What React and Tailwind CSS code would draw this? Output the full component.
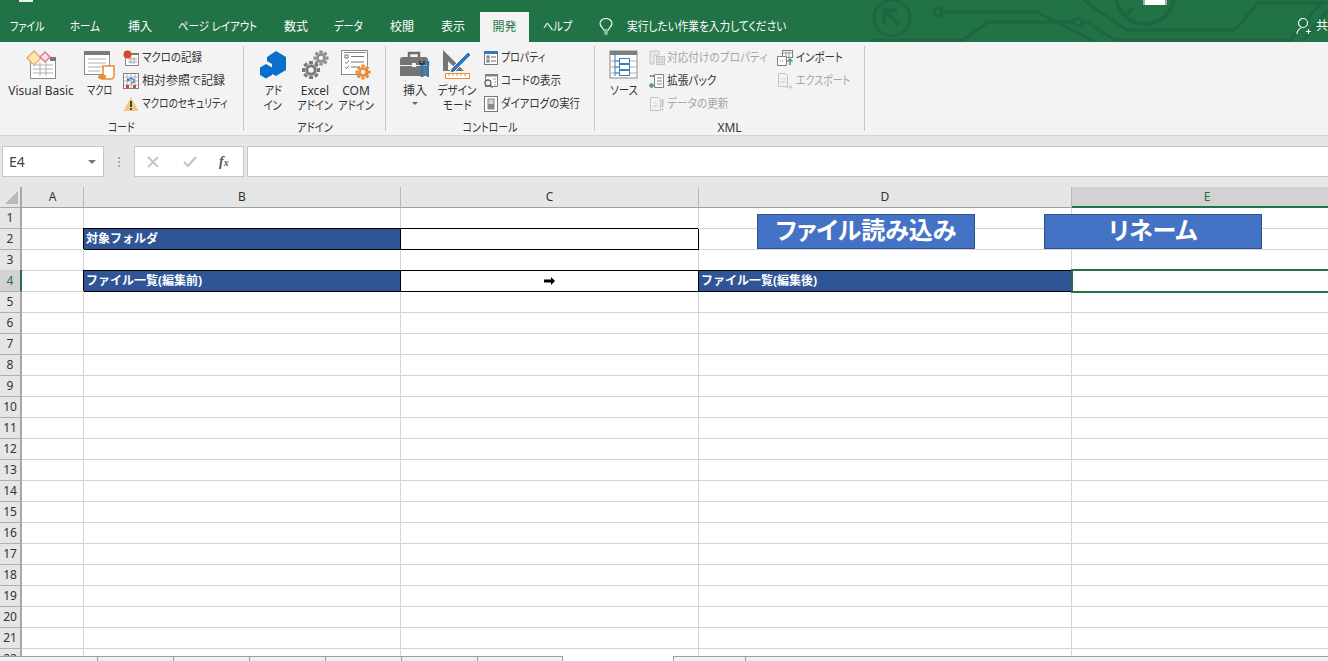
import React from 'react';

const TABS = [
  { t: 'ファイル', w: 'w-[34px]', s: 'scale-x-[.83]' },
  { t: 'ホーム', w: 'w-[32px]', s: 'scale-x-[.87]' },
  { t: '挿入', w: 'w-[24px]', s: '' },
  { t: 'ページ レイアウト', w: 'w-[80px]', s: 'scale-x-[.87]' },
  { t: '数式', w: 'w-[24px]', s: '' },
  { t: 'データ', w: 'w-[30px]', s: 'scale-x-[.85]' },
  { t: '校閲', w: 'w-[25px]', s: '' },
  { t: '表示', w: 'w-[25px]', s: '' },
];
const COLS = ['A', 'B', 'C', 'D'];
const ROWS = Array.from({ length: 22 }, (_, i) => i + 1);

/* Meiryo UI kana run narrower than Noto's, so squeeze them a bit */
function Sq({ s = '', o = 'origin-left', children }) {
  return <span className={`inline-block whitespace-nowrap ${o} ${s}`}>{children}</span>;
}

/* ---------- icons ---------- */
function CircuitArt() {
  return (
    <svg width="458" height="42" viewBox="870 0 458 42" className="absolute right-0 top-0" fill="none" stroke="#1f6640" strokeWidth="3">
      <circle cx="892" cy="18" r="18" />
      <path d="M884 10h13M884 10v13M884 10l15 15" strokeWidth="4" />
      <circle cx="938" cy="12" r="4" />
      <path d="M942 12h95l56 29" />
      <path d="M870 40h93l25-18h86" />
      <circle cx="1078" cy="22" r="4" />
      <path d="M1082 22h5l28 18h175l33-40" />
      <path d="M1083 0l44 30h108l23-27h70" />
      <circle cx="1145" cy="-5" r="29" strokeWidth="4" />
      <path d="M1133 8l-6 6" strokeWidth="4" />
      <path d="M1303 41l25-31" />
      <rect x="1143" y="0" width="24" height="5" fill="#fff" stroke="none" />
      <rect x="1143" y="0" width="2" height="5" fill="#aaa" stroke="none" />
      <rect x="1165" y="0" width="2" height="5" fill="#aaa" stroke="none" />
    </svg>
  );
}

function VbIcon() {
  return (
    <svg width="32" height="30" viewBox="0 0 32 30" fill="none">
      <rect x="5.500" y="7.500" width="25" height="21" fill="#fff" stroke="#8a8a8a" />
      <rect x="25" y="7" width="6" height="4" fill="#7a7a7a" />
      <path d="M8 15h20M8 19h20M8 23h20M15 12v14M21 12v14" stroke="#b0b0b0" />
      <path d="M9 1l7 7-7 7-7-7z" fill="#fbe6b8" stroke="#e0b46a" strokeWidth="1.500" />
      <path d="M20 2l5 5-5 5-5-5z" fill="#fbe0e6" stroke="#de7a92" strokeWidth="1.500" />
    </svg>
  );
}

function MacroIcon() {
  return (
    <svg width="32" height="30" viewBox="0 0 32 30" fill="none">
      <rect x="0.500" y="1.500" width="25" height="23" fill="#fff" stroke="#8a8a8a" />
      <rect x="0" y="1" width="26" height="4" fill="#7a7a7a" />
      <path d="M4 9h18M4 13h18M4 17h18M4 21h12" stroke="#b0b0b0" />
      <path d="M19 16h11v9c0 2-1 4-3 4H17c2 0 2-2 2-4z" fill="#fff" stroke="#ed8b3a" strokeWidth="1.600" />
      <path d="M16 25h6c0 2 0 4-3 4h-3c-1 0-2-1-2-2s1-2 2-2z" fill="#ed8b3a" />
    </svg>
  );
}

function RecordIcon() {
  return (
    <svg className="shrink-0" width="16" height="16" viewBox="0 0 16 16" fill="none">
      <rect x="2.500" y="3.500" width="13" height="12" fill="#fff" stroke="#8a8a8a" />
      <rect x="6" y="3" width="10" height="2" fill="#7a7a7a" />
      <path d="M5 9h9M5 12h9M8 7v7M11 7v7" stroke="#a8a8a8" />
      <circle cx="4.500" cy="4.500" r="4" fill="#d9482b" />
    </svg>
  );
}

function RelativeIcon() {
  return (
    <svg className="shrink-0" width="16" height="16" viewBox="0 0 16 16" fill="none">
      <rect x="0.500" y="0.500" width="15" height="15" fill="#fff" stroke="#808080" />
      <path d="M1 4h14M1 8h14M1 12h14M4 1v14M8 1v14M12 1v14" stroke="#b4b4b4" />
      <path d="M5 7c1-2 5-2 6 0s-1 3-3 3" stroke="#3f7fc0" strokeWidth="1.400" />
      <path d="M4 5v3h3z" fill="#3f7fc0" />
      <rect x="3" y="12" width="3" height="3" fill="#d9482b" />
      <rect x="10" y="12" width="3" height="3" fill="#d9482b" />
    </svg>
  );
}

function WarnIcon() {
  return (
    <svg className="shrink-0" width="16" height="16" viewBox="0 0 16 16">
      <path d="M8 1l7.500 14H.5z" fill="#f2c77e" />
      <rect x="7" y="5" width="2" height="6" fill="#444" />
      <rect x="7" y="12" width="2" height="2" fill="#444" />
    </svg>
  );
}

function AddinIcon() {
  return (
    <svg width="28" height="30" viewBox="0 0 28 30">
      <path d="M17 1l10 6v13l-10 6-4-2V14l-5-3V7z" fill="#0a6fcb" />
      <path d="M7 14l6 3.500V25l-6 3.500L1 25v-7.500z" fill="#0a6fcb" />
    </svg>
  );
}

function gearPath(cx, cy, r) {
  const pts = [];
  for (let i = 0; i < 8; i++) {
    const a = (i * Math.PI) / 4;
    pts.push(`M${cx + Math.cos(a) * (r - 2)} ${cy + Math.sin(a) * (r - 2)}L${cx + Math.cos(a) * (r + 1)} ${cy + Math.sin(a) * (r + 1)}`);
  }
  return pts.join('');
}

function Gear({ cx, cy, r, color, hole = '#f3f3f3' }) {
  return (
    <g>
      <path d={gearPath(cx, cy, r)} stroke={color} strokeWidth={r / 2} />
      <circle cx={cx} cy={cy} r={r * 0.72} fill={color} />
      <circle cx={cx} cy={cy} r={r * 0.34} fill={hole} />
    </g>
  );
}

function ExcelAddinIcon() {
  return (
    <svg width="28" height="30" viewBox="0 0 28 30">
      <Gear cx={20} cy={8} r={6.500} color="#8d8d8d" />
      <Gear cx={10} cy={20} r={8} color="#7a7a7a" />
    </svg>
  );
}

function ComIcon() {
  return (
    <svg width="32" height="30" viewBox="0 0 32 30" fill="none">
      <rect x="1.500" y="0.500" width="26" height="24" fill="#fff" stroke="#8a8a8a" />
      <path d="M4 2.500h22" stroke="#8a8a8a" />
      <rect x="5" y="5" width="3" height="3" stroke="#777" />
      <path d="M11 6.500h13M11 12h13M11 17h6M5 12l1.500 1.500L9 10.500M5 17l1.500 1.500L9 15.500" stroke="#777" />
      <Gear cx={23} cy={22} r={6.500} color="#ed8b3a" />
    </svg>
  );
}

function ToolboxIcon() {
  return (
    <svg width="32" height="30" viewBox="0 0 32 30" fill="none">
      <path d="M10 7V3h10v4" stroke="#6f6f6f" strokeWidth="2.500" />
      <path d="M1 10c0-2 1-3 3-3h22c2 0 3 1 3 3v5H1z" fill="#757575" />
      <rect x="1" y="16" width="28" height="10" rx="1" fill="#757575" />
      <rect x="13" y="13" width="4" height="4" fill="#f3f3f3" />
      <path d="M23 13v14" stroke="#2f78bd" strokeWidth="3" />
      <path d="M29 13v14" stroke="#2f78bd" strokeWidth="2" />
      <path d="M26.500 11v5c0 1 2.500 1 2.500 0v-5M29.500 11v5" stroke="#2f78bd" strokeWidth="1.500" />
      <path d="M21 11v3h4v-3" stroke="#333" strokeWidth="1.500" />
    </svg>
  );
}

function DesignIcon() {
  return (
    <svg width="32" height="32" viewBox="0 0 32 32" fill="none">
      <path d="M2 1l21 21H2z" fill="#757575" />
      <path d="M7 12l9 9H7z" fill="#f3f3f3" />
      <path d="M10 20L27 3l3 3-17 17-4 1z" fill="#2f78bd" stroke="#f3f3f3" />
      <rect x="4.500" y="24.500" width="24" height="5" fill="#fff" stroke="#ed8b3a" />
      <path d="M8 25v2M12 25v2M16 25v2M20 25v2M24 25v2" stroke="#ed8b3a" />
    </svg>
  );
}

function PropsIcon() {
  return (
    <svg className="shrink-0" width="16" height="16" viewBox="0 0 16 16" fill="none">
      <rect x="1.500" y="1.500" width="13" height="13" fill="#fff" stroke="#777" />
      <rect x="1" y="1" width="14" height="3" fill="#2f78bd" />
      <rect x="4" y="6" width="2" height="2" stroke="#666" />
      <rect x="4" y="10" width="2" height="2" stroke="#666" />
      <path d="M8 7h5M8 11h5" stroke="#666" />
    </svg>
  );
}

function CodeIcon() {
  return (
    <svg className="shrink-0" width="16" height="16" viewBox="0 0 16 16" fill="none">
      <rect x="2.500" y="1.500" width="12" height="12" fill="#fff" stroke="#808080" />
      <rect x="2" y="1" width="13" height="2.500" fill="#808080" />
      <path d="M10 6h3M11 9h2M11 12h2" stroke="#999" />
      <circle cx="5" cy="10" r="3" fill="#f3f3f3" stroke="#666" strokeWidth="1.300" />
      <path d="M7 12l2.500 2.500" stroke="#666" strokeWidth="1.600" />
    </svg>
  );
}

function DialogIcon() {
  return (
    <svg className="shrink-0" width="16" height="16" viewBox="0 0 16 16" fill="none">
      <rect x="1.500" y="0.500" width="13" height="15" fill="#fff" stroke="#777" />
      <rect x="5" y="3" width="6" height="10" fill="#d4d4d4" stroke="#888" />
      <rect x="5" y="8" width="6" height="5" fill="#8a8a8a" />
    </svg>
  );
}

function SourceIcon() {
  return (
    <svg width="30" height="30" viewBox="0 0 30 30" fill="none">
      <rect x="1" y="1" width="27" height="27" fill="#fff" stroke="#8a8a8a" />
      <rect x="1" y="1" width="27" height="4" fill="#808080" />
      <path d="M1 11h9M1 17h9M1 23h9M20 11h8M20 17h8M20 23h8" stroke="#b0b0b0" />
      <path d="M6 1v25M6 11h4M6 17h4M6 23h4" stroke="#3f7fc0" />
      <rect x="10.500" y="8.500" width="10" height="5" stroke="#3f7fc0" />
      <rect x="10.500" y="14.500" width="10" height="5" stroke="#3f7fc0" />
      <rect x="10.500" y="20.500" width="10" height="5" stroke="#3f7fc0" />
    </svg>
  );
}

function MapPropsIcon() {
  return (
    <svg className="shrink-0" width="16" height="16" viewBox="0 0 16 16" fill="none" stroke="#c4c4c4">
      <path d="M1 1h9v4H5v9H1z" fill="#e8e8e8" />
      <rect x="7.500" y="6.500" width="8" height="8" fill="#f3f3f3" />
      <path d="M7 9h8M7 12h8M10 7v7M13 7v7" />
    </svg>
  );
}

function PackIcon() {
  return (
    <svg className="shrink-0" width="16" height="16" viewBox="0 0 16 16" fill="none">
      <path d="M5.500 1.500h9v13h-9z" fill="#fff" stroke="#808080" />
      <path d="M8 5h5M8 8h5M8 11h5" stroke="#808080" />
      <path d="M1 3h5" stroke="#2f78bd" strokeWidth="2" strokeDasharray="1.500 1" />
      <path d="M0 12.500h5M2.500 10v5" stroke="#4f9a74" strokeWidth="2" />
    </svg>
  );
}

function RefreshIcon() {
  return (
    <svg className="shrink-0" width="16" height="16" viewBox="0 0 16 16" fill="none" stroke="#c4c4c4">
      <path d="M1.500 1.500h8l2 2v11h-10z" fill="#f3f3f3" />
      <path d="M4 7h1M6 7h1M8 7h1M4 10h5" />
      <path d="M13.500 3v8M13.500 12.500v2" strokeWidth="2" />
    </svg>
  );
}

function ImportIcon() {
  return (
    <svg className="shrink-0" width="16" height="16" viewBox="0 0 16 16" fill="none">
      <rect x="5.500" y="0.500" width="10" height="7" fill="#fff" stroke="#808080" />
      <path d="M6 3h9M9 1v6M12 1v6" stroke="#999" />
      <path d="M0.500 6.500h9v9h-9z" fill="#fff" stroke="#808080" />
      <path d="M3 11h1M5 11h1" stroke="#2f78bd" />
      <path d="M13 15V9M10.500 11.500L13 9l2.500 2.500" stroke="#4f9a74" strokeWidth="1.500" />
    </svg>
  );
}

function ExportIcon() {
  return (
    <svg className="shrink-0" width="16" height="16" viewBox="0 0 16 16" fill="none" stroke="#c4c4c4">
      <path d="M1.500 0.500h7l2 2v11h-9z" fill="#f3f3f3" />
      <path d="M3.500 6h1M5.500 6h1M7.500 6h1M3.500 9h5" />
      <path d="M8 14h7M13 12l2 2-2 2" />
    </svg>
  );
}

/* ---------- ribbon parts ---------- */
function LargeBtn({ icon, lines, width, s = '', caret }) {
  return (
    <div className={`shrink-0 flex flex-col items-center ${width}`}>
      <div className="h-[37px] flex items-center justify-center">{icon}</div>
      {lines.map((l) => (
        <div key={l} className="h-[15px] leading-[15px]">
          <Sq o="origin-center" s={/^[A-Za-z ]+$/.test(l) ? '' : s}>{l}</Sq>
        </div>
      ))}
      {caret && <div className="mt-[4px] w-0 h-0 border-x-[3px] border-x-transparent border-t-[3px] border-t-[#666]" />}
    </div>
  );
}

function SmallBtn({ icon, label, s, off, gap = 'gap-[3px]' }) {
  return (
    <div className={`h-[23px] flex items-center ${gap} ${off ? 'text-[#a6a6a6]' : ''}`}>
      {icon}
      <Sq s={s}>{label}</Sq>
    </div>
  );
}

function Group({ label, s, width, children }) {
  return (
    <div className={`${width} h-[85px] shrink-0 flex flex-col border-r border-[#c6c6c6]`}>
      <div className="flex h-[70px] shrink-0">{children}</div>
      <div className="h-[15px] shrink-0 flex items-center justify-center text-center leading-[15px] pt-[8px]">
        <Sq o="origin-center" s={s}>{label}</Sq>
      </div>
    </div>
  );
}

function Ribbon() {
  return (
    <div className="h-[93px] bg-[#f3f3f3] flex pt-[4px] text-[12px] text-[#333] [font-feature-settings:'palt']">
      <Group label="コード" s="scale-x-[.82]" width="w-[244px]">
        <div className="w-[4px] shrink-0" />
        <LargeBtn width="w-[74px]" icon={<VbIcon />} lines={['Visual Basic']} />
        <div className="w-[4px] shrink-0" />
        <LargeBtn width="w-[36px]" s="scale-x-[.76]" icon={<MacroIcon />} lines={['マクロ']} />
        <div className="ml-[5px] shrink-0 flex flex-col">
          <SmallBtn icon={<RecordIcon />} s="scale-x-[.87]" label="マクロの記録" />
          <SmallBtn icon={<RelativeIcon />} label="相対参照で記録" />
          <SmallBtn icon={<WarnIcon />} s="scale-x-[.8]" label="マクロのセキュリティ" />
        </div>
      </Group>
      <Group label="アドイン" s="scale-x-[.85]" width="w-[142px]">
        <div className="w-[9px] shrink-0" />
        <LargeBtn width="w-[40px]" s="scale-x-[.85]" icon={<AddinIcon />} lines={['アド', 'イン']} />
        <div className="w-[2px] shrink-0" />
        <LargeBtn width="w-[40px]" s="scale-x-[.85]" icon={<ExcelAddinIcon />} lines={['Excel', 'アドイン']} />
        <LargeBtn width="w-[42px]" s="scale-x-[.85]" icon={<ComIcon />} lines={['COM', 'アドイン']} />
      </Group>
      <Group label="コントロール" s="scale-x-[.83]" width="w-[209px]">
        <div className="w-[9px] shrink-0" />
        <LargeBtn width="w-[40px]" icon={<ToolboxIcon />} lines={['挿入']} caret />
        <LargeBtn width="w-[44px]" s="scale-x-[.88]" icon={<DesignIcon />} lines={['デザイン', 'モード']} />
        <div className="ml-[4px] shrink-0 flex flex-col">
          <SmallBtn gap="gap-[2px]" s="scale-x-[.83]" icon={<PropsIcon />} label="プロパティ" />
          <SmallBtn gap="gap-[2px]" s="scale-x-[.88]" icon={<CodeIcon />} label="コードの表示" />
          <SmallBtn gap="gap-[2px]" s="scale-x-[.87]" icon={<DialogIcon />} label="ダイアログの実行" />
        </div>
      </Group>
      <Group label="XML" width="w-[270px]">
        <div className="w-[9px] shrink-0" />
        <LargeBtn width="w-[40px]" s="scale-x-[.87]" icon={<SourceIcon />} lines={['ソース']} />
        <div className="ml-[5px] w-[128px] shrink-0 flex flex-col">
          <SmallBtn gap="gap-[2px]" s="scale-x-[.89]" off icon={<MapPropsIcon />} label="対応付けのプロパティ" />
          <SmallBtn gap="gap-[2px]" s="scale-x-[.89]" icon={<PackIcon />} label="拡張パック" />
          <SmallBtn gap="gap-[2px]" s="scale-x-[.89]" off icon={<RefreshIcon />} label="データの更新" />
        </div>
        <div className="shrink-0 flex flex-col">
          <SmallBtn s="scale-x-[.87]" icon={<ImportIcon />} label="インポート" />
          <SmallBtn s="scale-x-[.83]" icon={<ExportIcon />} off label="エクスポート" />
        </div>
      </Group>
    </div>
  );
}

/* ---------- sheet ---------- */
const CELL = 'border-r border-b border-[#d4d4d4]';
const BLUE = 'relative z-10 bg-[#2f5597] text-white font-bold text-[12px] leading-[20px] pl-[2px] border-r border-b border-black shadow-[-1px_-1px_0_0_#000] whitespace-nowrap';

function RowHead({ n, active }) {
  return (
    <div className={`relative z-20 flex items-center justify-center text-[12px] border-b border-b-[#b0b0b0] ${active ? 'bg-[#d2d2d2] text-[#217346] border-r-2 border-r-[#217346] -mt-px pt-px' : 'bg-[#e6e6e6] text-[#333] border-r-2 border-r-[#a8a8a8]'}`}>
      {n}
    </div>
  );
}

function Row({ n }) {
  if (n === 2) {
    return (
      <>
        <RowHead n={n} />
        <div className={CELL} />
        <div className={BLUE}>対象フォルダ</div>
        <div className="relative z-10 bg-white border-r border-b border-black shadow-[-1px_-1px_0_0_#000]" />
        <div className={CELL} />
        <div className={CELL} />
      </>
    );
  }
  if (n === 4) {
    return (
      <>
        <RowHead n={n} active />
        <div className={CELL} />
        <div className={BLUE}>ファイル一覧(編集前)</div>
        <div className="relative z-10 bg-white border-r border-b border-black shadow-[-1px_-1px_0_0_#000] flex items-center justify-center">
          <svg width="11" height="8" viewBox="0 0 11 8"><path d="M0 2.500h7V0l4 4-4 4V5.500H0z" fill="#000" /></svg>
        </div>
        <div className={BLUE}>ファイル一覧(編集後)</div>
        <div className="relative z-20">
          <div className="absolute -top-[2px] -bottom-px -left-px -right-[4px] border-2 border-[#217346]" />
        </div>
      </>
    );
  }
  return (
    <>
      <RowHead n={n} />
      <div className={CELL} />
      <div className={CELL} />
      <div className={CELL} />
      <div className={CELL} />
      <div className="border-b border-[#d4d4d4]" />
    </>
  );
}

export default function App() {
  return (
    <div className="h-[661px] w-[1328px] overflow-hidden flex flex-col bg-white font-['Noto_Sans','Noto_Sans_CJK_JP',sans-serif]">
      {/* title bar + tabs */}
      <div className="relative h-[42px] shrink-0 bg-[#217346] text-white text-[12px] [font-feature-settings:'palt']">
        <CircuitArt />
        <div className="absolute left-[19px] top-0 w-[14px] h-[2px] bg-[#e8f0ea]" />
        <div className="relative pt-[12px] pl-[10px] flex h-full items-stretch gap-[26px]">
          {TABS.map((t) => (
            <div key={t.t} className={`${t.w} shrink-0 leading-[30px]`}>
              <Sq s={t.s}>{t.t}</Sq>
            </div>
          ))}
          <div className="-mx-[12px] w-[49px] shrink-0 bg-[#f3f3f3] text-[#217346] leading-[30px] text-center">開発</div>
          <div className="w-[30px] shrink-0 leading-[30px]"><Sq s="scale-x-[.85]">ヘルプ</Sq></div>
          <div className="flex items-center gap-[14px] shrink-0">
            <svg className="shrink-0" width="14" height="18" viewBox="0 0 14 18" fill="none" stroke="#fff" strokeWidth="1.100">
              <path d="M4.500 12c0-2-3.500-3.500-3.500-6.500a6 5 0 0 1 12 0c0 3-3.500 4.500-3.500 6.500z" />
              <path d="M5 14h4M5.500 16h3" />
            </svg>
            <Sq s="scale-x-[.89]">実行したい作業を入力してください</Sq>
          </div>
          <div className="absolute left-[1296px] top-[17px] flex items-center gap-[5px] whitespace-nowrap">
            <svg className="shrink-0" width="15" height="18" viewBox="0 0 15 18" fill="none" stroke="#fff" strokeWidth="1.100">
              <circle cx="7" cy="6" r="4.500" />
              <path d="M1 17c0-3 2-5 4-6M10 14.500h5M12.500 12v5" />
            </svg>
            <span>共有</span>
          </div>
        </div>
      </div>

      <Ribbon />

      {/* formula bar */}
      <div className="h-[52px] shrink-0 bg-[#e6e6e6] border-t border-[#d4d4d4] pt-[10px] flex items-start">
        <div className="ml-[2px] w-[102px] h-[31px] bg-white border border-[#c6c6c6] flex items-center justify-between pl-[6px] pr-[7px] text-[14px] text-[#444]">
          <span>E4</span>
          <div className="w-0 h-0 border-x-[4px] border-x-transparent border-t-[4px] border-t-[#777]" />
        </div>
        <div className="w-[30px] h-[31px] flex flex-col items-center justify-center gap-[2px]">
          <div className="w-[2px] h-[2px] bg-[#aaa]" />
          <div className="w-[2px] h-[2px] bg-[#aaa]" />
          <div className="w-[2px] h-[2px] bg-[#aaa]" />
        </div>
        <div className="w-[110px] h-[31px] bg-white border border-[#c6c6c6] flex items-center pl-[12px]">
          <svg width="12" height="12" viewBox="0 0 12 12" stroke="#c4c4c4" strokeWidth="1.800"><path d="M1 1l10 10M11 1L1 11" /></svg>
          <svg className="ml-[24px]" width="14" height="12" viewBox="0 0 14 12" fill="none" stroke="#c4c4c4" strokeWidth="2.200"><path d="M1 6l4 4 8-9" /></svg>
          <span className="ml-[22px] font-['Liberation_Serif',serif] italic font-bold text-[14px] text-[#555] leading-none">f<span className="text-[10px]">x</span></span>
        </div>
        <div className="ml-[3px] flex-1 h-[31px] bg-white border border-[#c6c6c6] border-r-0" />
      </div>

      {/* grid */}
      <div className="relative flex-1 overflow-hidden">
        <div className="grid grid-cols-[22px_62px_317px_298px_373px_270px] grid-rows-[21px] auto-rows-[21px]">
          <div className="bg-[#e6e6e6] border-r-2 border-b border-[#a8a8a8] flex items-end justify-end pb-[3px] pr-[2px]">
            <div className="w-0 h-0 border-l-[13px] border-l-transparent border-b-[13px] border-b-[#b8b8b8]" />
          </div>
          {COLS.map((c) => (
            <div key={c} className="bg-[#e6e6e6] border-r border-r-[#b8b8b8] border-b border-b-[#9f9f9f] flex items-center justify-center text-[12px] text-[#333]">
              {c}
            </div>
          ))}
          <div className="bg-[#d2d2d2] border-b-2 border-[#217346] text-[#217346] flex items-center justify-center text-[12px]">E</div>
          {ROWS.map((n) => (
            <Row key={n} n={n} />
          ))}
        </div>

        {/* shapes floating over the sheet */}
        <div className="absolute z-30 left-[757px] top-[27px] w-[218px] h-[35px] pb-[3px] bg-[#4472c4] border border-[#2f528f] text-white font-bold text-[24px] flex items-center justify-center whitespace-nowrap [font-feature-settings:'palt']">
          ファイル読み込み
        </div>
        <div className="absolute z-30 left-[1044px] top-[27px] w-[218px] h-[35px] pb-[3px] bg-[#4472c4] border border-[#2f528f] text-white font-bold text-[24px] flex items-center justify-center whitespace-nowrap [font-feature-settings:'palt']">
          リネーム
        </div>
      </div>

      {/* sheet tabs */}
      <div className="relative z-40 h-[5px] shrink-0 flex bg-white">
        <div className="w-[563px] bg-[#f0f0f0] border-t border-r border-[#9f9f9f] flex">
          {[0, 1, 2, 3, 4, 5].map((i) => (
            <div key={i} className={`${i === 0 ? 'w-[98px]' : 'w-[76px]'} border-r border-[#9f9f9f]`} />
          ))}
        </div>
        <div className="w-[110px]" />
        <div className="flex-1 bg-[#f0f0f0] border-t border-l border-[#9f9f9f]">
          <div className="w-[72px] h-full border-r border-[#9f9f9f]" />
        </div>
      </div>
    </div>
  );
}
